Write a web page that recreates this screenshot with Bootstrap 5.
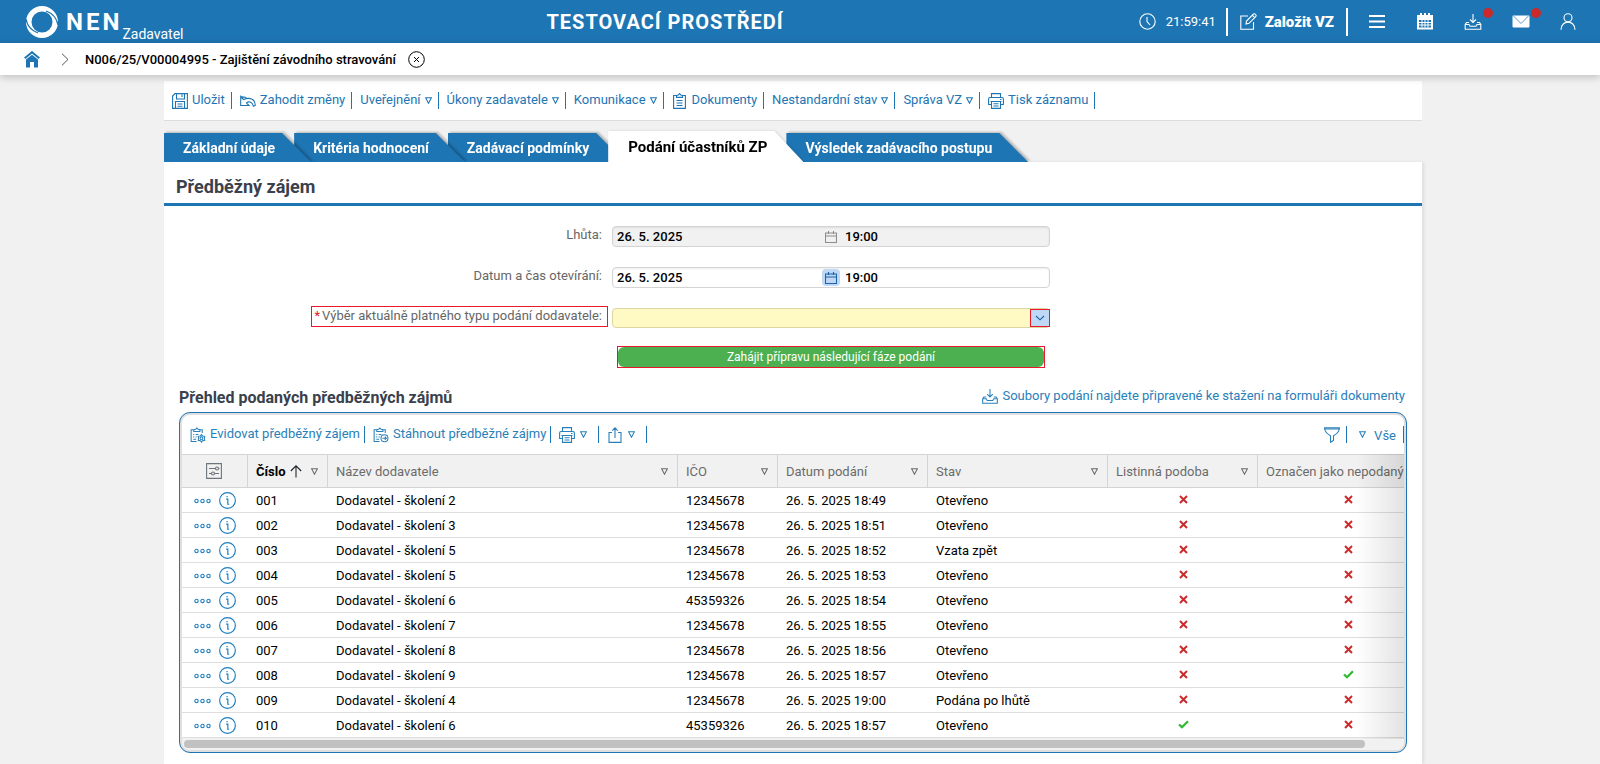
<!DOCTYPE html>
<html lang="cs">
<head>
<meta charset="utf-8">
<meta name="viewport" content="width=device-width, initial-scale=1">
<title>NEN – Předběžný zájem</title>
<link href="https://cdn.jsdelivr.net/npm/bootstrap@5.3.0/dist/css/bootstrap.min.css" rel="stylesheet">
<style>
:root{--nen:#1e75b3;--ink:#3a414c;--grid:#dedede}
body{font-family:Roboto,"Liberation Sans",sans-serif;font-size:13px;line-height:17px;background:#f1f1f1;color:#000}
svg{display:block;flex:none}
a{text-decoration:none}
.ln{fill:none;stroke:currentColor;stroke-width:1.1}
.topbar{background:var(--nen);color:#fff;height:43px}
.topbar a{color:#fff}
.brand{padding:0 8px 0 26px;height:41px}
.logo-word{font-size:24px;line-height:28px;font-weight:700;letter-spacing:3px}
.logo-role{font-size:14px;line-height:16px}
.env-title{font-size:20px;line-height:24px;font-weight:700;letter-spacing:1px}
.vline{width:2px;height:28px;background:#fff}
.clock{width:48px;margin:0 12px 0 10px}
.new-vz{font-size:15px;font-weight:900;line-height:20px;margin:0 12px}
.navi{margin-left:30px}
.dot{width:10px;height:10px;background:#cc2a2a;left:19px;top:-5px}
.crumbs{height:32px;background:#fff;box-shadow:0 2px 8px rgba(0,0,0,.22);position:relative}
.crumbs .crumb-text{font-weight:500;color:#000}
.crumb-sep{margin:0 16px 0 21px}
.crumb-x{margin-left:12px}
.page-wrap{padding-right:14px}
.page-col{max-width:1258px;padding-top:6px}
.toolbox{background:#fff;border-bottom:1px solid #dcdcdc;height:40px;padding:11px 0 0}
.tools>button{display:flex;align-items:center;height:17px;padding:0 6px 0 8px;border:0;border-right:1px solid var(--nen);background:none;color:var(--nen);white-space:nowrap;font-size:13px;line-height:17px}
.tools span{margin-top:-2px}
.tri{width:7px;height:7px;margin-left:4px}
.ico{width:16px;height:16px;margin-right:4px}
.tabrow{margin-top:10px;height:31px}
.tabrow li{filter:drop-shadow(2px -1px 1px rgba(0,0,0,.25));margin-right:-17px;position:relative;align-self:flex-end}
.tabrow li:nth-child(1){z-index:5}.tabrow li:nth-child(2){z-index:4}.tabrow li:nth-child(3){z-index:3}
.tabrow li.on{z-index:6;filter:drop-shadow(1px 0 1px rgba(0,0,0,.12))}
.tabrow a{display:block;height:29px;line-height:31px;padding:0 36px 0 19px;background:var(--nen);color:#fff;font-size:14px;font-weight:700;clip-path:polygon(0 0,calc(100% - 29px) 0,100% 100%,0 100%);white-space:nowrap}
.tabrow .on a{height:31px;background:#fff;color:#000;font-size:15px;font-weight:700;line-height:32px;padding-left:20px}
.tabs-clip{overflow:hidden;padding:1px 20px 0 0;margin-top:-1px}
.panel{background:#fff;box-shadow:2px 0 3px rgba(0,0,0,.08);min-height:calc(100vh - 162px)}
.panel-title{font-size:18px;line-height:24px;font-weight:700;color:var(--ink);margin:0;padding:13px 12px 4px;border-bottom:3px solid var(--nen)}
.sheet{display:grid;grid-template-columns:444px minmax(0,438px);column-gap:4px;row-gap:20px;padding-top:20px}
.lab{color:#666;text-align:right;padding:0 6px;line-height:17px;height:21px;justify-self:end}
.field{height:21px;border:1px solid #d4d4d4;border-radius:4px;background:#fff;box-shadow:inset 0 1px 2px rgba(0,0,0,.08)}
.field input{border:0;background:none;font-weight:500;font-size:13px;line-height:17px;padding:0;color:#000;width:100px;outline:0}
.field.off{background:#f1f1f1}
.field .tm{margin-left:5px}
.cal{width:18px;height:17px;border:0;padding:0;border-radius:4px;background:none;color:#8d8d8d}
.cal.act{background:#bed8f5;color:#1c62a8}
.date-part{width:205px}
.req{border:1px solid #e8192c;padding:0 5px 0 2px;margin-top:-2px}
.star{color:#d22;margin-right:2px}
.pick{height:20px;border:1px solid #dcd5a3;border-radius:4px;background:#fff9c4}
.pick select{appearance:none;border:0;background:none;width:100%;height:18px;outline:0}
.arrow{width:20px;height:18px;border:1px solid #e8192c;background:#bed8f5;color:#1c62a8;right:-1px;top:0;pointer-events:none}
.gobox{border:1px solid #e8192c;height:22px;margin:-2px 5px 0}
.go{background:#4caf50;color:#fff;border:0;border-radius:6px;font-size:12px;line-height:20px;height:20px;padding:0}
.sub-row{padding:20px 17px 0 15px}
.sub-title{font-size:16px;line-height:20px;font-weight:700;color:var(--ink);margin:0}
.lnk{color:#2980b9;height:17px;margin-top:-1px}
.gridbox{margin:4px 15px 0;border:1px solid var(--nen);border-radius:11px;padding:2px;background:#dfdfdf}
.gridin{border-radius:8px;background:#fff;overflow:hidden;position:relative}
.gridbar{height:39px}
.gridbar .tools>button{color:#2980b9}
.gridbar .tools>.slim{padding-right:4px}
.tools .wide{padding-right:11px}
.tools .wide .tri{margin-left:5px}
.tools .all{padding-left:7px;padding-right:7px}
.tools .all .tri{margin:0 8px 0 5px}
.tools .all span{margin-top:2px}
.fade-r{right:0;top:39px;height:285px;width:48px;background:linear-gradient(90deg,rgba(0,0,0,0),rgba(0,0,0,.11));pointer-events:none}
.view{overflow:hidden}
.rec{table-layout:fixed;width:1255px;border-collapse:separate;border-spacing:0}
.rec th{height:34px;background:#f1f1f1;border-top:1px solid #d4d4d4;border-bottom:1px solid #d4d4d4;border-right:1px solid #d4d4d4;font-weight:400;color:#6b6b6b;padding:0 9px 0 8px;white-space:nowrap}
.rec td{height:25px;border-bottom:1px solid var(--grid);padding:1px 8px 0;white-space:nowrap;line-height:17px}
.rec td>svg{margin-bottom:3px}
.rec button,.lone{border:0;background:none;padding:0;color:#1e7ebf}
.track{height:12px;background:#f1f1f1;padding:2px 2px 0}
.thumb{height:8px;border-radius:4px;background:#c1c1c1;width:97%}
</style>
</head>
<body>
<svg width="0" height="0" class="position-absolute" aria-hidden="true">
<symbol id="tri" viewBox="0 0 7 7"><path class="ln" d="M.6 .8H6.4L3.5 6.2Z"/></symbol>
<symbol id="save" viewBox="0 0 16 16"><path class="ln" d="M3 .6H15.4V15.4H.6V3ZM4.5 .8V6H12.5V.8M10 1.5V4M3.5 15.2V8.5H12.5V15.2M5.5 11H10.5M5.5 13.2H10.5"/></symbol>
<symbol id="undo" viewBox="0 0 16 16"><path class="ln" d="M.7 3.500V12.500H9L6.500 10C8.500 8 12 8.500 13.500 13.300L15.300 12.500C15 6 10 3.800 3.500 6.500ZM.7 3.500L6.500 4.500"/></symbol>
<symbol id="print" viewBox="0 0 16 16"><path class="ln" d="M3.500 4.500V.6H12.500V4.500M3.500 11.500H.6V6Q.6 4.500 2 4.500H14Q15.400 4.500 15.400 6V11.500H12.500M2.500 8.500H13.500M3.500 8.500V15.400H12.500V8.500M5.500 10.800H10.500M5.500 13H10.500M12 6.500H13.500"/></symbol>
<symbol id="clip" viewBox="0 0 14 16"><path class="ln" d="M3.500 2.500H.6V15.400H12.400V2.500H9.500M3.500 4.400V2.500L5.200 2L6.500 .6L7.800 2L9.500 2.500V4.400ZM3.500 7.500H9.500M3.500 10H9.500M3.500 12.500H9.500"/></symbol>
<symbol id="clipgear" viewBox="0 0 17 16"><path class="ln" d="M4 2.500H1.200V15H7M10.500 2.500H13V6M4 4.200V2.300L6 2L7.300 .6L8.600 2L10.500 2.300V4.200ZM3.500 7.500H4.500M6 7.500H9M3.500 10H4.500M6 10H7M3.500 12.500H6.500"/><circle class="ln" cx="12.200" cy="11.500" r="1.500"/><path class="ln" d="M12.200 7.500L13.400 9L15.700 9.400L15.200 11.500L15.700 13.600L13.400 14L12.200 15.500L11 14L8.700 13.600L9.200 11.500L8.700 9.400L11 9Z"/></symbol>
<symbol id="cliparrow" viewBox="0 0 17 16"><path class="ln" d="M4 2.500H1.200V15H7M10.500 2.500H13V6M4 4.200V2.300L6 2L7.300 .6L8.600 2L10.500 2.300V4.200ZM3.500 7.500H4.500M6 7.500H9M3.500 10H4.500M6 10H7M3.500 12.500H6.500"/><circle class="ln" cx="12.200" cy="11.500" r="3.700"/><path class="ln" d="M10 11.500H14M12.500 9.800L14.200 11.500L12.500 13.200"/></symbol>
<symbol id="share" viewBox="0 0 16 16"><path class="ln" d="M5 5.500H2V15.400H14V5.500H11M8 11V1M5.300 3.600L8 .9L10.700 3.600"/></symbol>
<symbol id="down" viewBox="0 0 17 17"><path class="ln" d="M8.500 1V9.500M5.500 6.500L8.500 9.500L11.500 6.500M4.500 9.500H2L.7 11.500V16.200H16.300V11.500L15 9.500H12.500M.8 11.500H4.500L5.500 13.200H11.500L12.500 11.500H16.200"/></symbol>
<symbol id="cal" viewBox="0 0 12 12"><path class="ln" d="M.5 2H11.500V11.500H.5ZM.5 5H11.500M3.500 0V3M8.500 0V3"/></symbol>
<symbol id="funnel" viewBox="0 0 16 16"><path class="ln" d="M.6 .7H15.400V2Q14.500 6 9.500 8.700V13.500L6.500 15.300V8.700Q1.500 6 .6 2ZM.6 2H15.400"/></symbol>
<symbol id="set" viewBox="0 0 16 16"><path class="ln" d="M.6 .6H15.400V15.400H.6ZM3 5.500H9.500M3 10.500H5M9 10.500H13M12.500 5.500H13.500"/><circle class="ln" cx="11" cy="5.500" r="1.500"/><circle class="ln" cx="7" cy="10.500" r="1.500"/></symbol>
<symbol id="dots" viewBox="0 0 17 6"><g class="ln"><circle cx="2.500" cy="3" r="1.700"/><circle cx="8.500" cy="3" r="1.700"/><circle cx="14.500" cy="3" r="1.700"/></g></symbol>
<symbol id="info" viewBox="0 0 16 16"><circle class="ln" cx="8" cy="8" r="7.400"/><path class="ln" d="M6.700 6.700H8.300V11.500H9.600M7.600 3.700V5"/></symbol>
<symbol id="no" viewBox="0 0 9 9"><path fill="none" stroke="#cc2b2b" stroke-width="2" d="M1 1L8 8M8 1L1 8"/></symbol>
<symbol id="yes" viewBox="0 0 11 9"><path fill="none" stroke="#35b835" stroke-width="2.300" d="M1 4.500L4 7.200L10 1.200"/></symbol>
</svg>

<header class="topbar d-flex align-items-center">
  <a href="#" class="brand d-flex align-items-center" aria-label="NEN Zadavatel">
    <svg width="32" height="32" viewBox="0 0 32 32"><path fill="#fff" fill-rule="evenodd" d="M16 0A16 16 0 1 1 16 32A16 16 0 1 1 16 0ZM16 5.500A10.500 10.500 0 1 0 16 26.500A10.500 10.500 0 1 0 16 5.500Z"/><path fill="none" stroke="#1e75b3" stroke-width="1.300" d="M0 13C1 19 4 24 12 27M32 19C31 13 28 8 20 5"/></svg>
    <span class="logo-word ms-2">NEN</span>
    <span class="logo-role align-self-end">Zadavatel</span>
  </a>
  <div class="env-title flex-fill text-center">TESTOVACÍ PROSTŘEDÍ</div>
  <div class="d-flex align-items-center pe-4">
    <svg width="17" height="17" viewBox="0 0 17 17"><circle class="ln" cx="8.500" cy="8.500" r="7.700"/><path class="ln" stroke-width="1.500" d="M8 4V8.500L11 12"/></svg>
    <span class="clock">21:59:41</span>
    <span class="vline"></span>
    <a href="#" class="d-flex align-items-center new-vz"><svg class="me-2" width="17" height="17" viewBox="0 0 17 17"><path class="ln" d="M8 3H.8V16.200H13.500V9M6 11L6.500 8L13.500 1Q15 .2 16 2Q16.500 2.800 15.500 3.800L9 10.300ZM12.500 2.300L14.700 4.600"/></svg>Založit VZ</a>
    <span class="vline me-1"></span>
    <a href="#" class="ms-3" aria-label="Menu"><svg width="18" height="17" viewBox="0 0 18 17"><path stroke="#fff" stroke-width="2" d="M1 3H17M1 8.500H17M1 14H17"/></svg></a>
    <a href="#" class="navi" aria-label="Kalendář"><svg width="18" height="17" viewBox="0 0 18 17"><path fill="#fff" fill-rule="evenodd" d="M1 2H4V0H6V2H8V0H10V2H12V0H14V2H17V16.500H1ZM3 7V14.500H15V7Z"/><path stroke="#fff" d="M3 9.500H15M3 12H15M6 7V14.500M9 7V14.500M12 7V14.500"/></svg></a>
    <a href="#" class="navi position-relative" aria-label="Stažené"><svg width="18" height="17"><use href="#down"/></svg><span class="dot position-absolute rounded-circle"></span></a>
    <a href="#" class="navi position-relative" aria-label="Zprávy"><svg width="18" height="17" viewBox="0 0 18 17"><rect x=".5" y="2.500" width="17" height="12" rx="1" fill="#fff"/><path fill="none" stroke="#5b9bc8" d="M1.500 3L9 10.500L16.500 3"/></svg><span class="dot position-absolute rounded-circle"></span></a>
    <a href="#" class="navi" aria-label="Uživatel"><svg width="16" height="17" viewBox="0 0 16 17"><circle class="ln" cx="8" cy="4.800" r="4"/><path class="ln" d="M1 16.800C1 6.500 15 6.500 15 16.800"/></svg></a>
  </div>
</header>
<nav class="crumbs d-flex align-items-center px-4" aria-label="Cesta">
  <a href="#" aria-label="Domů"><svg width="16" height="17" viewBox="0 0 16 17"><path fill="none" stroke="#1e75b3" stroke-width="2" d="M.7 7.200L8 1.200L15.300 7.200"/><path fill="#1e75b3" d="M2 8.500L8 3.700L14 8.500V16.500H10V11H6V16.500H2Z"/></svg></a>
  <svg class="crumb-sep" width="8" height="13" viewBox="0 0 8 13"><path fill="none" stroke="#555" d="M1 .7L7 6.500L1 12.300"/></svg>
  <span class="crumb-text">N006/25/V00004995 - Zajištění závodního stravování</span>
  <button class="lone crumb-x" aria-label="Zavřít"><svg width="17" height="17" viewBox="0 0 17 17"><g fill="none" stroke="#000"><circle cx="8.500" cy="8.500" r="7.800"/><path d="M6 6L11 11M11 6L6 11"/></g></svg></button>
</nav>

<div class="page-wrap">
<main class="page-col mx-auto">
  <div class="toolbox">
    <div class="tools d-flex">
      <button><svg class="ico"><use href="#save"/></svg><span>Uložit</span></button>
      <button><svg class="ico"><use href="#undo"/></svg><span>Zahodit změny</span></button>
      <button><span>Uveřejnění</span><svg class="tri"><use href="#tri"/></svg></button>
      <button><span>Úkony zadavatele</span><svg class="tri"><use href="#tri"/></svg></button>
      <button><span>Komunikace</span><svg class="tri"><use href="#tri"/></svg></button>
      <button><svg class="ico"><use href="#clip"/></svg><span>Dokumenty</span></button>
      <button><span>Nestandardní stav</span><svg class="tri"><use href="#tri"/></svg></button>
      <button><span>Správa VZ</span><svg class="tri"><use href="#tri"/></svg></button>
      <button><svg class="ico"><use href="#print"/></svg><span>Tisk záznamu</span></button>
    </div>
  </div>
  <div class="tabs-clip">
  <ul class="tabrow list-unstyled d-flex mb-0">
    <li><a href="#">Základní údaje</a></li>
    <li><a href="#">Kritéria hodnocení</a></li>
    <li><a href="#">Zadávací podmínky</a></li>
    <li class="on"><a href="#" aria-current="page">Podání účastníků ZP</a></li>
    <li><a href="#">Výsledek zadávacího postupu</a></li>
  </ul>
  </div>
  <section class="panel">
    <h1 class="panel-title">Předběžný zájem</h1>
    <form class="sheet">
      <label class="lab" for="d1">Lhůta:</label>
      <div class="field off d-flex align-items-center ps-1">
        <div class="date-part"><input id="d1" value="26. 5. 2025" readonly></div>
        <div class="cal d-flex align-items-center justify-content-center"><svg width="12" height="12"><use href="#cal"/></svg></div>
        <input class="tm" value="19:00" aria-label="Lhůta – čas" readonly>
      </div>
      <label class="lab" for="d2">Datum a čas otevírání:</label>
      <div class="field d-flex align-items-center ps-1">
        <div class="date-part"><input id="d2" value="26. 5. 2025"></div>
        <button type="button" class="cal act d-flex align-items-center justify-content-center" aria-label="Kalendář"><svg width="12" height="12"><use href="#cal"/></svg></button>
        <input class="tm" value="19:00" aria-label="Otevírání – čas">
      </div>
      <label class="lab req" for="typ"><span class="star">*</span>Výběr aktuálně platného typu podání dodavatele:</label>
      <div class="pick position-relative"><select id="typ"><option></option></select>
        <span class="arrow position-absolute d-flex align-items-center justify-content-center"><svg width="10" height="6" viewBox="0 0 10 6"><path class="ln" d="M1 1L5 4.800L9 1"/></svg></span></div>
      <span></span>
      <div class="gobox"><button type="button" class="go w-100 d-block">Zahájit přípravu následující fáze podání</button></div>
    </form>
    <div class="sub-row d-flex justify-content-between">
      <h2 class="sub-title">Přehled podaných předběžných zájmů</h2>
      <a href="#" class="lnk d-flex align-items-center"><svg class="ico"><use href="#down"/></svg>Soubory podání najdete připravené ke stažení na formuláři dokumenty</a>
    </div>
    <div class="gridbox"><div class="gridin">
      <div class="gridbar d-flex align-items-center justify-content-between">
        <div class="tools d-flex">
          <button class="slim"><svg class="ico"><use href="#clipgear"/></svg><span>Evidovat předběžný zájem</span></button>
          <button class="slim"><svg class="ico"><use href="#cliparrow"/></svg><span>Stáhnout předběžné zájmy</span></button>
          <button aria-label="Tisk" class="wide"><svg class="ico me-0"><use href="#print"/></svg><svg class="tri"><use href="#tri"/></svg></button>
          <button aria-label="Sdílet" class="wide"><svg class="ico me-0"><use href="#share"/></svg><svg class="tri"><use href="#tri"/></svg></button>
        </div>
        <div class="tools d-flex">
          <button aria-label="Filtr"><svg width="16" height="16"><use href="#funnel"/></svg></button>
          <button class="all"><svg class="tri"><use href="#tri"/></svg><span>Vše</span></button>
        </div>
      </div>
      <div class="view">
        <table class="rec">
          <colgroup><col style="width:66px"><col style="width:80px"><col style="width:350px"><col style="width:100px"><col style="width:150px"><col style="width:180px"><col style="width:150px"><col style="width:180px"></colgroup>
          <thead><tr></tr></thead><tbody></tbody>
        </table>
      </div>
      <div class="track"><div class="thumb"></div></div>
      <div class="fade-r position-absolute"></div>
    </div></div>
  </section>
</main>
</div>
<script src="https://cdn.jsdelivr.net/npm/bootstrap@5.3.0/dist/js/bootstrap.bundle.min.js"></script>
<script>
const heads = ['Název dodavatele','IČO','Datum podání','Stav','Listinná podoba','Označen jako nepodaný'];
const tri = '<svg class="tri"><use href="#tri"/></svg>';
document.querySelector('.rec thead tr').innerHTML =
  '<th><button type="button" class="d-block mx-auto text-secondary" aria-label="Nastavení sloupců"><svg width="16" height="16"><use href="#set"/></svg></button></th>' +
  '<th><div class="d-flex align-items-center justify-content-between"><b class="text-black">Číslo</b><svg width="12" height="13" viewBox="0 0 12 13" class="text-dark"><path class="ln" d="M6 12.500V1M.8 6L6 .8L11.200 6"/></svg>' + tri + '</div></th>' +
  heads.map((h, i) => `<th><div class="d-flex align-items-center justify-content-between">${h}${i < 5 ? tri : ''}</div></th>`).join('');
const rows = [
  ['001','2','12345678','18:49','Otevřeno',0,0],
  ['002','3','12345678','18:51','Otevřeno',0,0],
  ['003','5','12345678','18:52','Vzata zpět',0,0],
  ['004','5','12345678','18:53','Otevřeno',0,0],
  ['005','6','45359326','18:54','Otevřeno',0,0],
  ['006','7','12345678','18:55','Otevřeno',0,0],
  ['007','8','12345678','18:56','Otevřeno',0,0],
  ['008','9','12345678','18:57','Otevřeno',0,1],
  ['009','4','12345678','19:00','Podána po lhůtě',0,0],
  ['010','6','45359326','18:57','Otevřeno',1,0]
];
const mark = v => v ? '<svg class="mx-auto" width="11" height="9" role="img" aria-label="Ano"><use href="#yes"/></svg>'
                    : '<svg class="mx-auto" width="9" height="9" role="img" aria-label="Ne"><use href="#no"/></svg>';
document.querySelector('.rec tbody').innerHTML = rows.map(r =>
  `<tr><td class="pe-0"><div class="d-flex align-items-center gap-2 ps-1"><button type="button" aria-label="Akce"><svg width="17" height="6"><use href="#dots"/></svg></button><button type="button" aria-label="Detail"><svg width="17" height="17"><use href="#info"/></svg></button></div></td>
   <td>${r[0]}</td><td>Dodavatel - školení ${r[1]}</td><td>${r[2]}</td><td>26. 5. 2025 ${r[3]}</td><td>${r[4]}</td><td>${mark(r[5])}</td><td>${mark(r[6])}</td></tr>`).join('');
</script>
</body>
</html>
